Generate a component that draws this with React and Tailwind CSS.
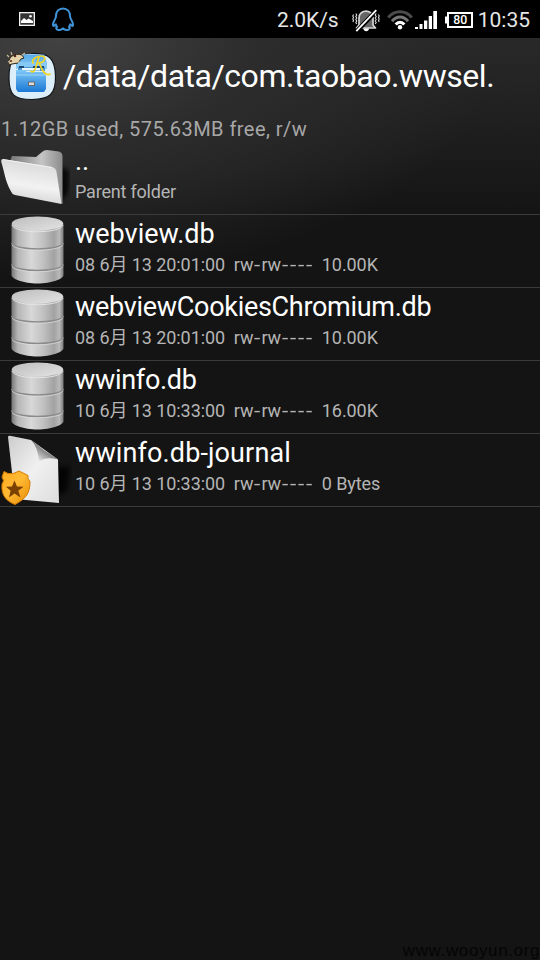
import React from "react";

function PictureIcon() {
  return (
    <svg className="ml-[19px] h-[14px] w-4" viewBox="0 0 16 14">
      <rect width="16" height="14" fill="#f2f2f2" />
      <rect x="1.3" y="1.3" width="13.4" height="11.4" fill="#333" />
      <path d="M2 11V9L5 6l2.500 2L9.500 6.500 14 9v2z" fill="#fff" />
      <circle cx="11.500" cy="4.200" r="1.300" fill="#fff" />
    </svg>
  );
}

function PenguinIcon() {
  return (
    <svg className="ml-4 h-6 w-6" viewBox="0 0 24 24" fill="none" stroke="#3f93d8" strokeWidth="2" strokeLinejoin="round" strokeLinecap="round">
      <path d="M12 1.500C7.500 1.500 5 5 5 9c0 1.500-.4 2.600-1.500 4.300C2 15.700 1.500 18.700 2.600 19c.9 0 1.700-1.100 2.200-1.700.1 1 .5 1.800 1.300 2.600-1.400.7-1.200 2.800 1.200 3 1.900.2 3.700-.2 4.700-1.500 1 1.300 2.800 1.700 4.700 1.500 2.400-.2 2.600-2.300 1.200-3 .8-.8 1.200-1.600 1.300-2.600.5.6 1.300 1.700 2.200 1.700 1.100-.3.6-3.300-.9-5.700C19.400 11.600 19 10.500 19 9c0-4-2.500-7.500-7-7.500z" />
    </svg>
  );
}

function MutedIcon() {
  return (
    <svg className="ml-[13px] mt-1 h-6 w-7" viewBox="0 0 28 24" fill="none">
      <path d="M7 16V9C7 5 9.500 2.500 14 2 18.500 2.500 21 5 21 9v7l2.500 3H4.500z" fill="#666" stroke="#d5d5d5" strokeWidth="1.700" strokeLinejoin="round" />
      <path d="M11.500 19.500h5.500c0 3.500-5.500 3.500-5.500 0z" fill="#fff" />
      <path d="M4.500 22.500L24.500 1.500" stroke="#000" strokeWidth="4.500" />
      <path d="M4.300 22.200L24.300 1.200" stroke="#fff" strokeWidth="1.800" />
      <path d="M3.800 4.500l1 1.500-1 1.500 1 1.500-1 1.500 1 1.500-1 1.500 1 1.500M1.500 5.500L.8 7l.7 1.500-.7 1.500.7 1.500-.7 1.500M24.200 4.500l-1 1.500 1 1.500-1 1.500 1 1.500-1 1.500 1 1.500-1 1.500M26.500 5.500l.7 1.500-.7 1.500.7 1.500-.7 1.500.7 1.500" stroke="#ddd" strokeWidth="1.100" />
    </svg>
  );
}

function WifiIcon() {
  return (
    <svg className="ml-[7px] mt-px h-5 w-[26px]" viewBox="0 0 26 20" fill="none" strokeWidth="3">
      <path d="M1.200 7.500C7.500-.3 18.500-.3 24.800 7.500" stroke="#4b4b4b" />
      <path d="M5 11.200C9.500 5.700 16.500 5.700 21 11.200" stroke="#777" />
      <path d="M8.700 14.500C11.200 11.500 14.800 11.500 17.300 14.500" stroke="#fff" />
      <circle cx="13" cy="17.200" r="2.200" fill="#fff" />
    </svg>
  );
}

function SignalIcon() {
  return (
    <svg className="ml-0.5 mt-0.5 h-[18px] w-[22px]" viewBox="0 0 22 18" fill="#fff">
      <path d="M0 16h3v2H0zM4.500 13h3v5h-3zM9 9.500h3.300V18H9zM13.700 5H17v13h-3.300zM18.300 0H22v18h-3.700z" />
    </svg>
  );
}

function BatteryIcon() {
  return (
    <svg className="ml-2 mt-0.5 h-4 w-7" viewBox="0 0 28 16" fill="none">
      <path d="M0 4.500h3v7H0z" fill="#fff" />
      <rect x="3" y="1" width="24" height="14" stroke="#fff" strokeWidth="2" />
      <text x="8.300" y="12.300" textLength="14" lengthAdjust="spacingAndGlyphs" fill="#fff" fontFamily="Roboto, sans-serif" fontWeight="500" fontSize="12">80</text>
    </svg>
  );
}

function AppIcon() {
  return (
    <svg className="ml-1.5 h-[52px] w-[52px] shrink-0" viewBox="0 0 52 52">
      <defs>
        <linearGradient id="cab" x1="0" y1="0" x2="0" y2="1">
          <stop offset="0" stopColor="#80c8f7" />
          <stop offset="1" stopColor="#1978d5" />
        </linearGradient>
        <linearGradient id="top" x1="0" y1="0" x2="0" y2="1">
          <stop offset="0" stopColor="#56aae8" />
          <stop offset="1" stopColor="#8ecdf6" />
        </linearGradient>
      </defs>
      <path d="M25 3.500C43 3 49 8 49.500 26 50 45 43 49 26 49.500 8 49.500 3 45 3 28 3 9 8 3.500 25 3.500z" fill="#dceefa" stroke="#14181b" strokeWidth="1.200" />
      <path d="M13 4.500h25l3 8.500v6H10v-6z" fill="url(#top)" />
      <path d="M11 12h29v5H11z" fill="#86c9f5" />
      <path d="M12 17h27v4H12z" fill="#4a94cf" />
      <path d="M13 16h5v2h-5zM27 16h11v2H27z" fill="#1b4872" />
      <path d="M16 18h18v2.500H16z" fill="#e8f6ff" />
      <path d="M10 20h9l2 2h19v17l-2 3H12l-2-3z" fill="url(#cab)" />
      <path d="M10 25h30" stroke="#9bd5fb" />
      <path d="M22.500 32h6v3.500h-6z" fill="#ddd" stroke="#666" />
      <path d="M3 15C1 8 8 2 16 5l2 3-3 1-3 4-6 1z" fill="#e4d2ab" stroke="#30251b" strokeWidth="1" />
      <path d="M3 7L1 5M6 5L5 2M16 5l3-2M4 11l-2 1M12 13l1-2" stroke="#c9ba91" strokeWidth="1.200" />
      <circle cx="9" cy="6" r="1.300" fill="#50251a" />
      <circle cx="5" cy="11" r="1" fill="#50251a" />
      <path d="M27 13c-2-3 3-7 8-7 5.500 0 5 6-2 7 2 3 3 9 7 11 1.500.7 3 .7 4 0M33 7c-2 5-2 10-5 14-1 1.200-2.500 1.200-3 .2" fill="none" stroke="#f4d522" strokeWidth="1.700" strokeLinecap="round" />
    </svg>
  );
}

function FolderIcon() {
  return (
    <svg className="h-[72px] w-[72px]" viewBox="0 0 72 72">
      <defs>
        <linearGradient id="front" x1=".6" y1="0" x2=".4" y2="1">
          <stop offset="0" stopColor="#d7d7d7" />
          <stop offset=".6" stopColor="#f2f2f2" />
          <stop offset="1" stopColor="#d2d2d2" />
        </linearGradient>
        <linearGradient id="back" x1="0" y1="0" x2="1" y2="0">
          <stop offset="0" stopColor="#777" />
          <stop offset=".6" stopColor="#c5c5c5" />
          <stop offset="1" stopColor="#8b8b8b" />
        </linearGradient>
        <filter id="soft"><feGaussianBlur stdDeviation="2" /></filter>
      </defs>
      <path d="M60 24l9 5-1 22-8 9z" fill="#050505" opacity=".8" filter="url(#soft)" />
      <path d="M10 19l2-5 24 1 6-5q2-2 5-2l12 1.500q3.500 1 3.500 5V62l-7-3z" fill="url(#back)" />
      <path d="M3 17l49 8q4 1 4.500 5L61.500 62 15 53q-3-.7-4-3.500C5 39 4 28 1.300 20q-.5-3 1.700-3z" fill="url(#front)" />
      <path d="M3 17.500l49 8" stroke="#f8f8f8" strokeWidth=".8" />
    </svg>
  );
}

function DatabaseIcon() {
  return (
    <svg className="h-[72px] w-[72px]" viewBox="0 0 72 72">
      <defs>
        <linearGradient id="metal" x1="0" y1="0" x2="1" y2="0">
          <stop offset="0" stopColor="#777" />
          <stop offset=".12" stopColor="#b5b5b5" />
          <stop offset=".38" stopColor="#d8d8d8" />
          <stop offset=".6" stopColor="#c2c2c2" />
          <stop offset=".82" stopColor="#a2a2a2" />
          <stop offset=".92" stopColor="#bababa" />
          <stop offset="1" stopColor="#7b7b7b" />
        </linearGradient>
        <linearGradient id="lid" x1="0" y1="0" x2="1" y2="1">
          <stop offset="0" stopColor="#bcbcbc" />
          <stop offset="1" stopColor="#e4e4e4" />
        </linearGradient>
      </defs>
      <path d="M11.500 9v51c0 4 12 8.500 26 8.500S63.500 64 63.500 60V9z" fill="url(#metal)" />
      <ellipse cx="37.500" cy="8.500" rx="25.700" ry="7" fill="url(#lid)" />
      <path d="M12 10c3 9 48 9 51 0" fill="none" stroke="#e4e4e4" strokeWidth="1" />
      <path d="M11.500 28c4 8 48 8 52 0M11.500 49.500c4 8 48 8 52 0" fill="none" stroke="#8b8b8b" strokeWidth="1.500" />
      <path d="M12 30c5 7 46 7 51 0M12 51.500c5 7 46 7 51 0" fill="none" stroke="#dedede" strokeWidth=".7" />
    </svg>
  );
}

function FileIcon() {
  return (
    <svg className="h-[72px] w-[72px]" viewBox="0 0 72 72">
      <defs>
        <linearGradient id="paper" x1="0" y1="0" x2="1" y2="1">
          <stop offset="0" stopColor="#ccc" />
          <stop offset=".5" stopColor="#f0f0f0" />
          <stop offset="1" stopColor="#ddd" />
        </linearGradient>
        <linearGradient id="curl" gradientUnits="userSpaceOnUse" x1="38" y1="27" x2="46" y2="16">
          <stop offset="0" stopColor="#eee" />
          <stop offset=".4" stopColor="#bbb" />
          <stop offset="1" stopColor="#777" />
        </linearGradient>
        <linearGradient id="gold" x1="0" y1="0" x2="1" y2="1">
          <stop offset="0" stopColor="#ffa91c" />
          <stop offset=".45" stopColor="#ffba35" />
          <stop offset="1" stopColor="#e88900" />
        </linearGradient>
        <filter id="shade"><feGaussianBlur stdDeviation="2.500" /></filter>
      </defs>
      <path d="M50 34l20-2-3 25-12 6z" fill="#050505" opacity=".8" filter="url(#shade)" />
      <path d="M8 3q0-1.500 2-1.300L31 6l27 19.500L59 69 15 65z" fill="url(#paper)" />
      <path d="M31 6q7 7 8 22 6-6 19-2.500Q44 17 31 6z" fill="url(#curl)" />
      <path d="M4 37.500l4 2q6 1 11-2.500l9 4.500q-1 3 2 6c0 12-4 17-15 23C6 67 1 61 2 50q3-3 0-7z" fill="url(#gold)" stroke="#d47b00" strokeWidth="1" />
      <path d="M14.500 46.500l2.500 6 6.500.3-5.200 4 2.200 6.700-6-4-5.500 4 1.600-6.700-4.600-4 6-.3z" fill="#7a4100" />
    </svg>
  );
}

const files = [
  { name: "webview.db", track: "tracking-normal", date: "08 6月 13 20:01:00", size: "10.00K", Icon: DatabaseIcon },
  { name: "webviewCookiesChromium.db", track: "tracking-[-0.3px]", date: "08 6月 13 20:01:00", size: "10.00K", Icon: DatabaseIcon },
  { name: "wwinfo.db", track: "tracking-[-0.3px]", date: "10 6月 13 10:33:00", size: "16.00K", Icon: DatabaseIcon },
  { name: "wwinfo.db-journal", track: "tracking-[0.12px]", date: "10 6月 13 10:33:00", size: "0 Bytes", Icon: FileIcon },
];

function Dash() {
  return <span className="inline-block w-[8px] scale-x-125 text-center">-</span>;
}

function Row({ Icon, name, track, children }) {
  return (
    <div className="flex h-[73px] border-b border-[#3b3b3b]">
      <Icon />
      <div className="ml-[3px] flex flex-col whitespace-pre">
        <div className={"mt-[3px] h-8 text-[27px] leading-[33px] text-white " + track}>{name}</div>
        <div className="mt-[3px] h-6 text-[18px] leading-6 tracking-[-0.08px] text-[#b5b5b5]">{children}</div>
      </div>
    </div>
  );
}

export default function App() {
  return (
    <div className="relative flex h-[960px] w-[540px] flex-col overflow-hidden bg-[#141414] font-[Roboto,'Noto_Sans_CJK_SC',sans-serif]">
      <header className="flex h-[38px] shrink-0 items-center bg-black text-[21px] text-[#e6e6e6]">
        <PictureIcon />
        <PenguinIcon />
        <span className="ml-auto pt-[3px]">2.0K/s</span>
        <MutedIcon />
        <WifiIcon />
        <SignalIcon />
        <BatteryIcon />
        <span className="ml-[5px] mr-[10px] pt-[4px]">10:35</span>
      </header>
      <main className="flex flex-1 flex-col bg-[radial-gradient(ellipse_440px_240px_at_60px_0px,#424242,#2c2c2c_45%,transparent),linear-gradient(#292929,#141414_180px)]">
        <div className="flex h-[76px] items-center">
          <AppIcon />
          <h1 className="ml-[5px] whitespace-nowrap text-[32px] leading-10 tracking-[-0.45px] text-white">/data/data/com.taobao.wwsel.</h1>
        </div>
        <div className="h-[28px] pl-px text-[20px] leading-[30px] tracking-[0.45px] text-[#a8a8a8]">1.12GB used, 575.63MB free, r/w</div>
        <Row Icon={FolderIcon} name=".." track="tracking-normal"><span className="tracking-[-0.2px]">Parent folder</span></Row>
        {files.map((f) => (
          <Row key={f.name} Icon={f.Icon} name={f.name} track={f.track}>
            {f.date + "  rw"}
            <Dash />
            rw
            <Dash />
            <Dash />
            <Dash />
            <Dash />
            {"  " + f.size}
          </Row>
        ))}
      </main>
      <div className="absolute -bottom-px right-0 font-['Liberation_Sans'] text-[17px] leading-5 tracking-[0.62px] text-[#050505]">www.wooyun.org</div>
    </div>
  );
}
